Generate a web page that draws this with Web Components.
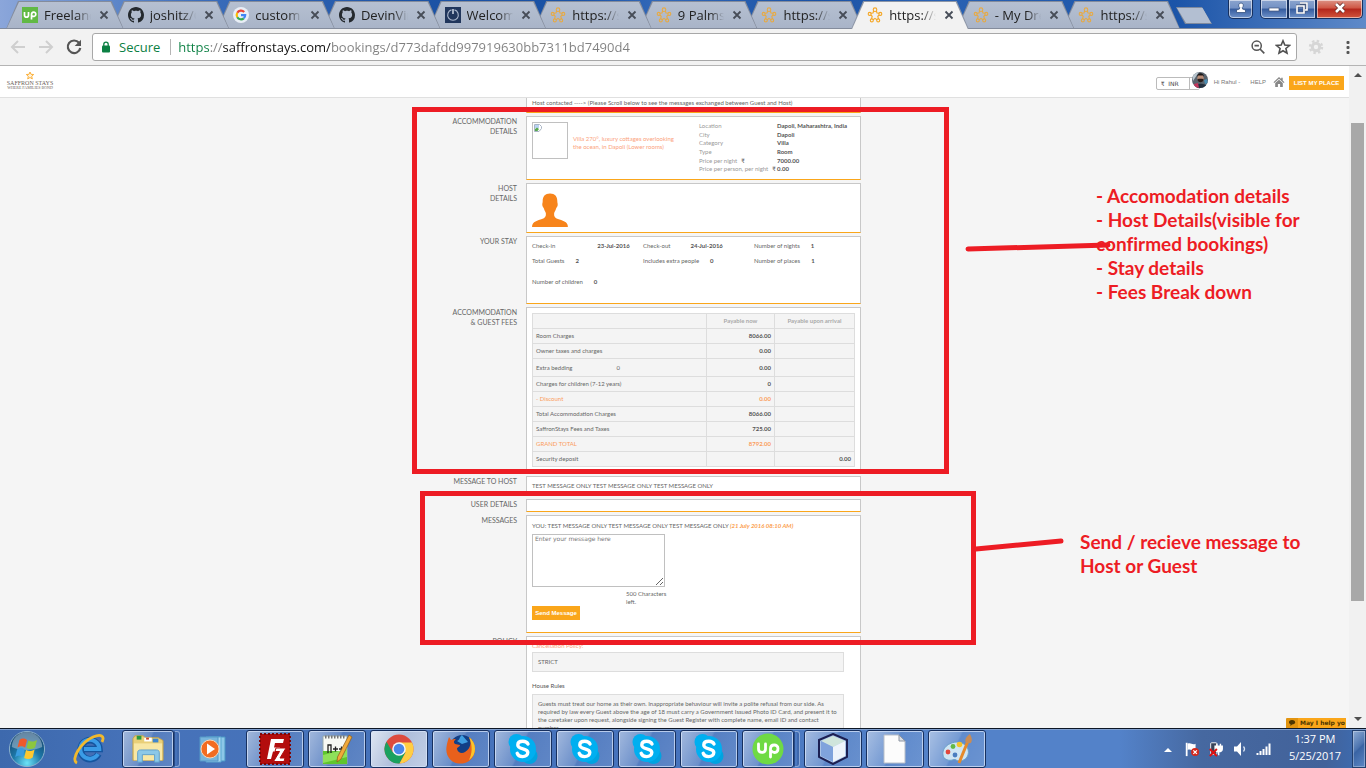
<!DOCTYPE html>
<html lang="en">
<head>
<meta charset="utf-8">
<title>SaffronStays booking</title>
<style>
html, body { margin: 0; height: 100%; }
body { font-family: "Open Sans", "Noto Sans", sans-serif; overflow: hidden; }
</style>
</head>
<body>
<desk-screen></desk-screen>
<script>
const define = (name, css, html, setup) => {
  const tpl = document.createElement('template');
  tpl.innerHTML = '<style>*,*::before,*::after{box-sizing:border-box}' + css + '</style>' + html;
  customElements.define(name, class extends HTMLElement {
    constructor() {
      super();
      this.attachShadow({ mode: 'open' }).append(tpl.content.cloneNode(true));
    }
    connectedCallback() { if (setup) setup.call(this, this.shadowRoot); }
  });
};

/* ---------- icons ---------- */
const svg = (vb, body) => `<svg viewBox="${vb}" width="100%" height="100%" aria-hidden="true">${body}</svg>`;
const skype = svg('0 0 32 32', '<circle cx="9.500" cy="9" r="8" fill="#00aff0"/><circle cx="22.500" cy="23" r="8" fill="#00a3e0"/><circle cx="16" cy="16" r="13" fill="#00aff0"/><path d="M21 11c-1-2-3-2.700-5.200-2.700-3 0-5 1.400-5 3.700 0 5.200 10 2.600 10 7.500 0 2.500-2.200 4.100-5.200 4.100-2.600 0-4.700-1-5.400-3.300" fill="none" stroke="#fff" stroke-width="3.400" stroke-linecap="round"/>');
const ICONS = {
  star5: svg('0 0 16 16', '<g fill="none" stroke="#f5a623" stroke-width="1.100" stroke-linejoin="round"><path d="M6.600 4L6 6 3.600 6.200M3.500 8L5.200 9.300 4.500 11.800M6 12.900L8 11.400 10 12.900M11.500 11.800L10.800 9.300 12.500 8M12.400 6.200L10 6 9.400 4"/><circle cx="8" cy="2.700" r="1.800"/><circle cx="13.300" cy="6.900" r="1.500"/><circle cx="2.700" cy="6.900" r="1.500"/><circle cx="11.200" cy="13.400" r="1.500"/><circle cx="4.800" cy="13.400" r="1.500"/></g>'),
  github: svg('0 0 16 16', '<path fill="#24292e" d="M8 0C3.580 0 0 3.580 0 8c0 3.540 2.290 6.530 5.470 7.590.4.070.55-.17.55-.38 0-.19-.01-.82-.01-1.490-2.010.37-2.530-.49-2.690-.94-.09-.23-.48-.94-.82-1.130-.28-.15-.68-.52-.01-.53.63-.01 1.080.58 1.230.82.72 1.210 1.870.87 2.330.66.070-.52.28-.87.51-1.070-1.780-.2-3.640-.89-3.640-3.950 0-.87.31-1.590.82-2.150-.08-.2-.36-1.020.08-2.120 0 0 .67-.21 2.200.82.64-.18 1.320-.27 2-.27s1.360.09 2 .27c1.530-1.040 2.200-.82 2.200-.82.44 1.100.16 1.920.08 2.120.51.56.82 1.270.82 2.150 0 3.070-1.870 3.750-3.650 3.950.29.25.54.73.54 1.480 0 1.070-.01 1.930-.01 2.200 0 .21.15.46.55.38A8 8 0 0 0 16 8c0-4.420-3.580-8-8-8z"/>'),
  google: svg('0 0 16 16', '<circle cx="8" cy="8" r="8" fill="#e9eef6"/><g fill="none" stroke-width="2.200"><path d="M4.300 5.800A4.300 4.300 0 0 1 11.200 5" stroke="#ea4335"/><path d="M4.300 5.800a4.300 4.300 0 0 0 0 4.400" stroke="#fbbc05"/><path d="M4.300 10.200A4.300 4.300 0 0 0 10.800 11.300" stroke="#34a853"/><path d="M8 8.100h4.200c0 1.300-.5 2.400-1.400 3.200" stroke="#4285f4"/></g>'),
  upsq: svg('0 0 16 16', '<rect width="16" height="16" fill="#61b944"/><path d="M2.500 5v3.200c0 2.600 4 2.600 4 0V5M9.500 12.500V7.700c0-3.400 4.300-3.200 4.300-.5s-3 2.700-4.300 1" fill="none" stroke="#fff" stroke-width="1.700"/>'),
  power: svg('0 0 16 16', '<rect width="16" height="16" fill="#21365c"/><path d="M6.500 2.900a5.300 5.300 0 1 0 3 0" fill="none" stroke="#a9b6cc" stroke-width="1.100"/><path d="M8 2v5" stroke="#dfe6f2" stroke-width="1.400"/>'),
  close: svg('0 0 10 10', '<path d="M1.500 1.500l7 7M8.500 1.500l-7 7" stroke="#474d58" stroke-width="1.800"/>'),
  back: svg('0 0 16 16', '<path d="M15 8H2M8 2L2 8l6 6" fill="none" stroke="#cfcfcf" stroke-width="2"/>'),
  fwd: svg('0 0 16 16', '<path d="M1 8h13M8 2l6 6-6 6" fill="none" stroke="#cfcfcf" stroke-width="2"/>'),
  reload: svg('0 0 16 16', '<path d="M13 3.800A6.300 6.300 0 1 0 14.300 9" fill="none" stroke="#555" stroke-width="2.200"/><path d="M15 .7v6.300H8.700z" fill="#555"/>'),
  lock: svg('0 0 10 12', '<rect x="1" y="4.500" width="8" height="7" rx="1" fill="#0b8043"/><path d="M2.800 5V3.300a2.200 2.200 0 0 1 4.400 0V5" fill="none" stroke="#0b8043" stroke-width="1.300"/>'),
  zoomout: svg('0 0 14 14', '<circle cx="5.700" cy="5.700" r="4.600" fill="none" stroke="#555" stroke-width="1.500"/><path d="M3.500 5.700h4.400M9 9l4.300 4.300" stroke="#555" stroke-width="1.700"/>'),
  star: svg('0 0 16 16', '<path d="M8 1.800l1.800 4.300 4.700.4-3.600 3 1.100 4.600L8 11.700l-4 2.400 1.100-4.600-3.600-3 4.700-.4z" fill="none" stroke="#505050" stroke-width="1.600"/>'),
  gear: svg('0 0 16 16', '<circle cx="8" cy="8" r="3.700" fill="none" stroke="#d6d6d6" stroke-width="3"/><circle cx="8" cy="8" r="6" fill="none" stroke="#d6d6d6" stroke-width="2.400" stroke-dasharray="2.400 2.310"/>'),
  dots: svg('0 0 4 14', '<g fill="#555"><rect x=".5" y="1" width="3" height="3" rx="1"/><rect x=".5" y="6" width="3" height="3" rx="1"/><rect x=".5" y="11" width="3" height="3" rx="1"/></g>'),
  person: svg('0 0 12 12', '<path d="M6 1a2.400 2.400 0 0 0-1.300 4.400L4.500 7 1.500 8v2.500h9V8l-3-1-.2-1.600A2.400 2.400 0 0 0 6 1z" fill="#fff" stroke="#34507f" stroke-width=".8"/>'),
  min: svg('0 0 12 12', '<rect x="1" y="6" width="10" height="3" fill="#fff" stroke="#42557a" stroke-width=".7"/>'),
  max: svg('0 0 12 12', '<path d="M4 1h7v7H9M1 4h7v7H1z" fill="none" stroke="#42557a" stroke-width="2.800"/><path d="M4 1h7v7H9M1 4h7v7H1z" fill="none" stroke="#fff" stroke-width="1.600"/>'),
  winx: svg('0 0 12 12', '<path d="M2 2l8 8M10 2l-8 8" stroke="#5c2420" stroke-width="4"/><path d="M2 2l8 8M10 2l-8 8" stroke="#fff" stroke-width="2.600"/>'),
  logostar: svg('0 0 10 9', '<path d="M5 1l1 2.300 2.700.2-2 1.800.6 2.600L5 6.500 2.700 7.900l.6-2.600-2-1.800L4 3.300z" fill="#fff3dc" stroke="#fbb03b" stroke-width="1"/>'),
  avatar: svg('0 0 16 16', '<defs><clipPath id="a"><circle cx="8" cy="8" r="8"/></clipPath></defs><g clip-path="url(#a)"><rect width="16" height="16" fill="#59636d"/><path d="M0 3l4-3h3L1 9z" fill="#b9c6cf"/><ellipse cx="8.500" cy="6" rx="3.200" ry="3.800" fill="#b98d77"/><path d="M5 5c0-5 7-5 7 0l-1-1.500H6z" fill="#1a1717"/><path d="M5.400 7.300c1.500-.6 4.800-.6 6.200 0 0 4-6.200 4-6.200 0z" fill="#2a1e1c"/><path d="M3 16c0-5 10-6 12-1v2z" fill="#22303f"/><path d="M2 12l4-1 1 5H3z" fill="#c2355c"/><path d="M12 8l3-1 1 4-3 1z" fill="#4a8fb5"/></g>'),
  home: svg('0 0 12 12', '<path d="M6 1L.5 6.200l.8.8L6 2.800 10.700 7l.8-.8L9.700 4.500V1.700H8.200v1.400z" fill="#888"/><path d="M6 3.700L2.200 7v4h2.700V8h2.200v3h2.700V7z" fill="#888"/>'),
  broken: svg('0 0 8 8', '<path d="M.5.500h5l2 2v2L5 7.500H.5z" fill="#fff" stroke="#a8b4c4"/><path d="M1 1h4v3H1z" fill="#b9d3f3"/><path d="M1 7V5l2-1.500L5 5 3.500 7z" fill="#58a84f"/>'),
  user: svg('0 0 36 34', '<path d="M18 0.500c5 0 7.300 3 7.300 7.500 0 2 .5 2 .4 4-.2 1.900-1.200 2-1.600 3.600-.5 2.300-1.800 3.400-2 4.900-.3 3 1 4.500 3.800 5.500 4 1.500 10 2.200 10 8H0c0-5.800 6-6.500 10-8 2.800-1 4.200-2.500 3.900-5.500-.2-1.500-1.500-2.600-2-4.900-.4-1.600-1.400-1.700-1.600-3.600-.1-2 .4-2 .4-4C10.700 3.500 13 .5 18 .5z" fill="#f7841b"/>'),
  chat: svg('0 0 8 8', '<path d="M4 1c4.300 0 4.300 4.500 0 4.500L2.500 7V5.200C0 4.500.5 1 4 1z" fill="#4d3600"/>'),
  orb: svg('0 0 40 40', '<defs><radialGradient id="o" cx=".5" cy=".9" r=".9"><stop offset="0" stop-color="#6de3f7"/><stop offset=".45" stop-color="#1d78a8"/><stop offset="1" stop-color="#143c63"/></radialGradient></defs><circle cx="20" cy="20" r="18.500" fill="url(#o)" stroke="#8fb4cf" stroke-width="1"/><path d="M4 18a16 16 0 0 1 32 0c-8 4-24 4-32 0z" fill="#b8cede" opacity=".5"/><path d="M12 10.500c3-2 5-2 8 0l-2 8c-3-2-5-2-8 0z" fill="#f0592a"/><path d="M21.500 11c3 1.500 5 1.500 9-.5l-2 8c-3 2-6 2-9 .5z" fill="#8cc63f"/><path d="M9.600 20.500c3-2 5-2 8 0l-2 8c-3-2-5-2-8 0z" fill="#3a9de0"/><path d="M19 21c3 1.500 5 1.500 9-.5l-2 8.500c-3 2-6 2-9 .5z" fill="#fdc82f"/>'),
  ie: svg('0 0 32 32', '<path d="M25.500 21a9.500 9.500 0 1 1 1-5H11" fill="none" stroke="#15559f" stroke-width="6.500"/><path d="M25 21a9.500 9.500 0 1 1 1.300-5H11" fill="none" stroke="#3a9be6" stroke-width="4"/><path d="M4 30C-3 27 8 9 20 4c8-3.500 12-1 9 5" fill="none" stroke="#f2b92c" stroke-width="2.800"/>'),
  explorer: svg('0 0 34 32', '<path d="M1 5l2-3h9l2 2h14l5 3v21H1z" fill="#e9cf78" stroke="#c3a24a"/><path d="M5 2h5v4H5z" fill="#2b9a3e"/><path d="M13 4h8v4h-8z" fill="#fff"/><path d="M15 4h3v2h-3z" fill="#c8402a"/><path d="M22 5h6v4h-6z" fill="#3f86cf"/><path d="M2 10h30v18H2z" fill="#f8e7a5"/><path d="M6 30V20c0-2 1-3 3-3h17c2 0 3 1 3 3v10h-5v-8H11v8z" fill="#8cc8e8" stroke="#5f9fca"/>'),
  media: svg('0 0 32 32', '<path d="M12 4h16v24H12z" fill="#8cc8e8" stroke="#4a97c4"/><path d="M9 4h15v25H9z" fill="#a9d7ee" stroke="#5aa7d2"/><path d="M3 4h18v24H3z" fill="#78b5dc" stroke="#5598c6"/><circle cx="13" cy="16" r="9" fill="#f26c22" stroke="#fbd6b5"/><path d="M10 10.500v11l8-5.500z" fill="#fff"/>'),
  fz: svg('0 0 32 32', '<rect x="1" y="1" width="30" height="30" fill="#b30d0d" stroke="#7e0606" stroke-width="2" stroke-dasharray="2 2"/><path d="M8 26L12 6h13l-1 4h-8l-1 4.500h6l-1 4h-6L12 26z" fill="#fff"/><path d="M17 15h10l-6 10h5l-1 3.500H14.500l6-10H16z" fill="#fff" stroke="#b30d0d"/>'),
  npp: svg('0 0 32 32', '<path d="M2 3h24v28H2z" fill="#f7f9f4" stroke="#9aa"/><path d="M2 18h24v13H2z" fill="#5fc52e"/><path d="M2 22l24-6v8L2 30z" fill="#8fe05a"/><path d="M4 4h20" stroke="#777" stroke-width="3" stroke-dasharray="1.500 1.500"/><path d="M7 20v-8h3v8M12 16h5M14.500 13.500v5M18 16h5M20.500 13.500v5" stroke="#222" stroke-width="1.300" fill="none"/><path d="M28 2l3 2-11 22-4 3 .5-5z" fill="#f1a93a" stroke="#8a5a18" stroke-width=".7"/>'),
  chrome: svg('0 0 32 32', '<circle cx="16" cy="16" r="14.500" fill="#dd4b3e"/><path d="M3.500 8.700A14.500 14.500 0 0 0 16.500 30.500L22.500 19.500 16 16 9.500 19z" fill="#1aa15f"/><path d="M16.500 30.500A14.500 14.500 0 0 0 29 9.500H16l6.500 10z" fill="#ffce44"/><circle cx="16" cy="16" r="6.800" fill="#f4f6f8"/><circle cx="16" cy="16" r="5.300" fill="#4a86ea"/>'),
  firefox: svg('0 0 32 32', '<circle cx="17" cy="14" r="12" fill="#123f86"/><path d="M17 2c-3 2-2 5-5 6l5 3 6-2z" fill="#3f9de0"/><path d="M24 4c9 7 8 22-4 26-12 3-20-6-18.500-16C2 10 3 7 4 4l2 3c2-1 3-1 5-1-2 2-3 3-1 5l5 1c0 2-3 2-3 4 1 4 5 5 8 3 5-3 7-8 4-15z" fill="#e8601c"/><path d="M24 4c8 6 8 18 0 23 3-6 4-14 0-23z" fill="#fbc52b"/>'),
  skype,
  upwork: svg('0 0 32 32', '<circle cx="16" cy="16" r="15.500" fill="#6fda44"/><path d="M6.500 11v5c0 4.500 7 4.500 7 0v-5M18.500 24v-8c0-5.500 7.500-5 7.500-.5s-4.500 5.500-7.500 1.500" fill="none" stroke="#fff" stroke-width="2.800" stroke-linecap="round"/>'),
  cube: svg('0 0 32 32', '<path d="M16 1l14 6v17l-14 7-14-7V7z" fill="#a9c3e6" stroke="#1b1f52" stroke-width="2"/><path d="M16 3l12 5-12 6L4 8z" fill="#cfe5dc"/><path d="M4 8l12 6v15L4 23z" fill="#7fa3dc"/><path d="M28 8l-12 6v15l12-6z" fill="#eef4fb"/>'),
  file: svg('0 0 32 32', '<path d="M5 2h15l6 6v22H5z" fill="#fcfcfc" stroke="#b9bfc8"/><path d="M20 2v6h6z" fill="#d9dde3" stroke="#8e96a3"/>'),
  paint: svg('0 0 32 32', '<path d="M3 25c-4-8 3-15 12-16 9 0 14 6 12 13-2 6-9 7-12 5-2-2-6 3-12-2z" fill="#cfe6f4" stroke="#6ba0c8"/><circle cx="7" cy="19" r="2.400" fill="#e2483d"/><circle cx="12" cy="13.500" r="2.400" fill="#63b947"/><circle cx="18.500" cy="11.500" r="2.800" fill="#f5c32c"/><circle cx="14" cy="22" r="2.400" fill="#4a7ec0"/><path d="M27 8l-9 22" stroke="#e58a2a" stroke-width="3"/><path d="M25 10c-2-4 1-7 4-9 1 3 3 5 1 9z" fill="#c98c55"/>'),
  up: svg('0 0 10 6', '<path d="M0 6l5-5 5 5z" fill="#fff"/>'),
  flag: svg('0 0 16 18', '<path d="M2 2v15" stroke="#fff" stroke-width="2"/><path d="M3 3c4-2 5 2 9 0v7c-4 2-5-2-9 0z" fill="#fff"/><circle cx="11.500" cy="12.500" r="4.500" fill="#d3281c"/><path d="M9.500 10.500l4 4M13.500 10.500l-4 4" stroke="#fff" stroke-width="1.400"/>'),
  plug: svg('0 0 16 18', '<rect x="2" y="2" width="7" height="13" rx="1" fill="#39435a" stroke="#fff"/><path d="M9 3v3M13 3v3M7 6h8v3c0 4-8 4-8 0zM11 12v4" stroke="#fff" stroke-width="1.600" fill="#fff"/><path d="M1 9l8 8M9 9l-8 8" stroke="#e01010" stroke-width="2.200"/>'),
  sound: svg('0 0 16 16', '<path d="M2 5.500h3L9 1v14l-4-4.500H2z" fill="#fff"/><path d="M11.500 5.500c1.300 1.500 1.300 3.500 0 5" fill="none" stroke="#dbe4f2" stroke-width="1.200"/>'),
  signal: svg('0 0 16 14', '<path d="M1.500 13v-2M4.500 13V9M7.500 13V7M10.500 13V4.500M13.500 13V1.500" stroke="#fff" stroke-width="2"/>')
};
customElements.define('ui-icon', class extends HTMLElement {
  constructor() { super(); this.attachShadow({ mode: 'open' }); }
  connectedCallback() {
    this.shadowRoot.innerHTML = '<style>:host{display:block;flex:none;width:16px;height:16px}svg{display:block}</style>' + (ICONS[this.getAttribute('name')] || '');
  }
});

/* ---------- browser frame ---------- */
define('browser-tab', `
  :host { display:flex; flex:1 1 0; min-width:0; height:29px; margin-right:-12px; padding:1px 15px 0 16px; align-items:center; gap:6px; position:relative; color:#222; }
  .shape, .shape::before { position:absolute; inset:1px 0 0; clip-path:polygon(12px 0, calc(100% - 12px) 0, 100% 100%, 0 100%); }
  .shape { background:#848c9c; }
  .shape::before { content:""; inset:1px 1px 1px; background:linear-gradient(#b6c0d1,#a9b4c8); }
  :host([active]) .shape { background:#8d96a6; }
  :host([active]) .shape::before { background:#f2f2f2; inset:1px 1px 0; }
  ui-icon, .t, button { position:relative; }
  :host([favicon=star5]:not([active])) #f { opacity:.8; }
  .t { flex:1; min-width:0; overflow:hidden; white-space:nowrap; font-size:13px; line-height:20px; -webkit-mask-image:linear-gradient(90deg,#000 65%,transparent 94%); mask-image:linear-gradient(90deg,#000 65%,transparent 94%); }
  button { border:0; padding:0; margin-left:-1px; background:none; flex:none; }
  button ui-icon { width:10px; height:10px; }`,
  `<div class="shape"></div><ui-icon id="f"></ui-icon><span class="t"><slot></slot></span><button aria-label="Close tab"><ui-icon name="close"></ui-icon></button>`,
  function (r) { const f = r.getElementById('f'); f.setAttribute('name', this.getAttribute('favicon')); f.connectedCallback(); });

define('win-button', `
  :host { display:block; }
  button { width:100%; height:100%; display:flex; align-items:center; justify-content:center; padding:0 0 2px; border:1px solid #16305f; border-top:0; box-shadow:inset 0 0 0 1px rgba(255,255,255,.55); background:linear-gradient(#8ba4ce,#7391c4 45%,#355b9d 50%,#6f93cb); border-radius:inherit; }
  :host([kind=close]) button { background:linear-gradient(#dc9385,#cf5543 45%,#b3261b 50%,#d2553c); }
  ui-icon { width:12px; height:12px; }`,
  `<button><ui-icon></ui-icon></button>`,
  function (r) { const i = r.querySelector('ui-icon'); i.setAttribute('name', this.getAttribute('icon')); i.connectedCallback(); r.querySelector('button').setAttribute('aria-label', this.getAttribute('label')); });

define('tab-strip', `
  :host { display:flex; height:29px; padding-left:6px; background:linear-gradient(90deg,#8ba6da 0,#6a90cf 6%,#3a6cba 15%,#1c53a5 30%,#1a52a5 42%,#3268b8 48%,#1a52a5 60%,#2a62b3 68%,#1b54a8 86%,#5f8ac9 100%); border-bottom:1px solid #7f8a9d; align-items:flex-start; }
  nav { flex:1; display:flex; min-width:0; margin-right:8px; }
  .new { width:36px; height:17px; margin-top:7px; border:0; padding:0; background:#7f8a9e; clip-path:polygon(0 0,26px 0,100% 100%,9px 100%); position:relative; }
  .new::before { content:""; position:absolute; inset:1px; background:#b3bfd2; clip-path:polygon(0 0,26px 0,100% 100%,9px 100%); }
  .me { width:25px; height:19px; margin-left:16px; border-radius:0 0 5px 5px; }
  .win { display:flex; height:19px; margin:0 3px 0 7px; }
  .win win-button { width:28px; } .win win-button:first-child { border-radius:0 0 0 5px; } .win win-button:last-child { width:47px; border-radius:0 0 5px 0; }`,
  `<nav><slot></slot></nav><button class="new" aria-label="New tab"></button>
  <win-button class="me" icon="person" label="Profile"></win-button>
  <div class="win"><win-button icon="min" label="Minimize"></win-button><win-button icon="max" label="Restore"></win-button><win-button kind="close" icon="winx" label="Close"></win-button></div>`,
  function () { [...this.children].forEach((t, i) => t.style.zIndex = t.hasAttribute('active') ? 30 : 20 - i); });

define('browser-toolbar', `
  :host { display:flex; height:37px; padding:0 16px 1px 10px; align-items:center; background:#f2f2f2; border-bottom:1px solid #b4b4b4; }
  button { border:0; padding:0; background:none; flex:none; }
  .nav { display:flex; gap:12px; margin-right:10px; }
  form { flex:1; display:flex; align-items:center; height:28px; border:1px solid #a8a8a8; border-radius:3px; background:#fff; padding:0 5px 0 8px; }
  .lock { width:10px; height:12px; }
  .sec { color:#0b8043; font-size:13px; line-height:20px; margin-left:8px; padding-right:10px; }
  .bar { width:1px; height:16px; background:#b5b5b5; margin-right:7px; }
  input { flex:1; min-width:0; border:0; outline:0; padding:0; height:22px; font:13px/22px "Open Sans",sans-serif; color:#333; -webkit-text-fill-color:transparent; background:linear-gradient(90deg,#0b8043 32px,#808080 32px 45px,#111 45px 153px,#808080 153px) text; -webkit-background-clip:text; }
  .acts { display:flex; gap:10px; align-items:center; }
  .ext { margin-left:11px; } .dots { margin-left:22px; } .dots ui-icon { width:4px; height:14px; }`,
  `<div class="nav"><button aria-label="Back"><ui-icon name="back"></ui-icon></button><button aria-label="Forward"><ui-icon name="fwd"></ui-icon></button><button aria-label="Reload"><ui-icon name="reload"></ui-icon></button></div>
  <form><ui-icon class="lock" name="lock"></ui-icon><span class="sec">Secure</span><span class="bar"></span>
  <input aria-label="Address" value="https://saffronstays.com/bookings/d773dafdd997919630bb7311bd7490d4">
  <span class="acts"><button type="button" aria-label="Zoom"><ui-icon name="zoomout" style="width:14px;height:14px"></ui-icon></button><button type="button" aria-label="Bookmark"><ui-icon name="star"></ui-icon></button></span></form>
  <button class="ext" aria-label="Extension"><ui-icon name="gear"></ui-icon></button><button class="dots" aria-label="Menu"><ui-icon name="dots"></ui-icon></button>`);

/* ---------- site ---------- */
define('site-header', `
  :host { display:flex; flex:none; height:32px; padding:0 5px 0 6px; align-items:center; background:#fff; border-bottom:1px solid #e0e0e0; font-family:"Liberation Sans",sans-serif; font-size:6px; line-height:8px; color:#777; }
  .logo { display:flex; flex-direction:column; align-items:center; color:#6d5f5a; text-decoration:none; font-family:"Liberation Serif",serif; width:48px; white-space:nowrap; padding-bottom:2px; }
  .logo ui-icon { width:10px; height:9px; }
  .logo b { font-weight:400; font-size:6px; line-height:6px; } .logo small { font-size:4px; line-height:4px; }
  .sp { flex:1; }
  select { appearance:none; width:44px; height:13px; margin-top:4px; border:1px solid #bbb; border-radius:2px; padding:0 0 0 4px; background:linear-gradient(90deg,transparent 32px,#bbb 32px 33px,transparent 33px),#fff; font:6px/11px "DejaVu Sans",sans-serif; color:#444; }
  .av { margin:0 0 4px -8px; position:relative; }
  a { color:#777; text-decoration:none; }
  .u { margin-left:6px; } .h { margin-left:10px; } .ho { margin-left:7px; } .ho ui-icon { width:12px; height:12px; }
  .list { margin-left:4px; margin-top:3px; width:55px; height:14px; padding:0; border:0; background:#faa61a; color:#fff; font:bold 6px/14px "Liberation Sans",sans-serif; white-space:nowrap; }`,
  `<a class="logo" href="#"><ui-icon name="logostar"></ui-icon><b>SAFFRON STAYS</b><small>WHERE FAMILIES BOND</small></a><span class="sp"></span>
  <select aria-label="Currency"><option>₹ &nbsp;INR</option></select><ui-icon class="av" name="avatar"></ui-icon>
  <a class="u" href="#">Hi Rahul -</a><a class="h" href="#">HELP</a><a class="ho" href="#" aria-label="Home"><ui-icon name="home"></ui-icon></a><button class="list">LIST MY PLACE</button>`);

define('detail-section', `
  :host { display:grid; grid-template-columns:78px 335px; column-gap:9px; }
  h2 { margin:0; font:400 7px/10px Lato,sans-serif; color:#666; text-align:right; text-transform:uppercase; }
  .box { border:1px solid #c8c8c8; border-bottom-color:#faa61a; background:#fff; padding:5px; min-height:13px; }`,
  `<h2></h2><div class="box"><slot></slot></div>`,
  function (r) { r.querySelector('h2').innerHTML = (this.getAttribute('heading') || '').replace('|', '<br>'); });

define('stay-item', `
  :host { display:flex; } dl { display:flex; margin:0; } dd { margin:0 0 0 var(--gap,11px); font-weight:700; color:#555; }`,
  `<dl><dt><slot></slot></dt><dd><slot name="v"></slot></dd></dl>`);

define('place-card', `
  :host { display:grid; grid-template-columns:41px 126px 1fr; height:52px; }
  .img { width:36px; height:37px; border:1px solid #c0c0c0; padding:1px; } .img ui-icon { width:8px; height:8px; }
  a { color:#fba27c; text-decoration:none; padding-top:13px; width:104px; white-space:nowrap; }
  dl { margin:0; display:grid; grid-template-columns:78px 1fr; grid-template-rows:repeat(6,1fr); color:#999; }
  dt { display:flex; gap:4px; white-space:nowrap; } dt i { font-style:normal; color:#555; } dd { margin:0; font-weight:700; color:#555; white-space:nowrap; }`,
  `<div class="img" role="img" aria-label="Villa"><ui-icon name="broken"></ui-icon></div><a href="#">Villa 270°, luxury cottages overlooking<br>the ocean, in Dapoli (Lower rooms)</a>
  <dl><dt>Location</dt><dd>Dapoli, Maharashtra, India</dd><dt>City</dt><dd>Dapoli</dd><dt>Category</dt><dd>Villa</dd><dt>Type</dt><dd>Room</dd><dt>Price per night <i>₹</i></dt><dd>7000.00</dd><dt>Price per person, per night <i>₹</i></dt><dd>0.00</dd></dl>`);

define('fees-table', `
  :host { display:block; } table { width:323px; border-collapse:collapse; table-layout:fixed; background:#f4f4f4; }
  th,td { border:1px solid #ddd; height:15px; padding:0 3px; text-align:right; font-weight:700; color:#555; line-height:8px; }
  thead th { text-align:center; color:#aaa; } tbody th { text-align:left; font-weight:400; color:#666; }
  .tall th,.tall td { height:18px; } .tall span { margin-left:44px; } .o th,.o td { color:#fb9d5c; }`,
  `<table><colgroup><col style="width:174px"><col style="width:68px"><col></colgroup>
  <thead><tr><th></th><th>Payable now</th><th>Payable upon arrival</th></tr></thead><tbody>
  <tr><th>Room Charges</th><td>8066.00</td><td></td></tr><tr><th>Owner taxes and charges</th><td>0.00</td><td></td></tr>
  <tr class="tall"><th>Extra bedding<span>0</span></th><td>0.00</td><td></td></tr><tr><th>Charges for children (7-12 years)</th><td>0</td><td></td></tr>
  <tr class="o"><th>- Discount</th><td>0.00</td><td></td></tr><tr><th>Total Accommodation Charges</th><td>8066.00</td><td></td></tr>
  <tr><th>SaffronStays Fees and Taxes</th><td>725.00</td><td></td></tr><tr class="o"><th>GRAND TOTAL</th><td>8792.00</td><td></td></tr>
  <tr><th>Security deposit</th><td></td><td>0.00</td></tr></tbody></table>`);

define('message-form', `
  :host { display:block; height:106px; } p { margin:0; padding:1px 0 4px; } em { font-weight:700; font-style:italic; color:#fb9d4c; }
  textarea { display:block; width:133px; height:53px; border:1px solid #c0c0c0; padding:0 2px; font:6px/8px "DejaVu Sans",sans-serif; color:#777; resize:both; margin:0; }
  textarea::placeholder { color:#777; }
  small { display:block; font-size:6px; margin:3px 0 0 94px; width:42px; }
  button { display:block; width:48px; height:14px; border:0; padding:0; background:#faa61a; color:#fff; font:bold 6px/14px "Liberation Sans",sans-serif; white-space:nowrap; }`,
  `<p>YOU: TEST MESSAGE ONLY TEST MESSAGE ONLY TEST MESSAGE ONLY <em>(21 July 2016 08:10 AM)</em></p>
  <textarea aria-label="Message" placeholder="Enter your message here"></textarea><small>500 Characters left.</small><button>Send Message</button>`);

define('policy-text', `
  :host { display:block; } h3,h4 { margin:0; font-weight:400; font-size:6px; line-height:8px; } h3 { color:#fba27c; margin-bottom:2px; } h4 { margin:10px 0 4px; color:#555; }
  div { width:312px; border:1px solid #ddd; background:#f4f4f4; padding:5px; }`,
  `<h3>Cancellation Policy:</h3><div>STRICT</div><h4>House Rules</h4>
  <div>Guests must treat our home as their own. Inappropriate behaviour will invite a polite refusal from our side. As required by law every Guest above the age of 18 must carry a Government Issued Photo ID Card, and present it to the caretaker upon request, alongside signing the Guest Register with complete name, email ID and contact number.</div>`);

/* red pen notes drawn over the booking */
define('red-notes', `
  :host { position:absolute; inset:0; pointer-events:none; color:#ed1c24; font:bold 19px/24px Lato,sans-serif; font-variant-ligatures:none; }
  .r { position:absolute; border:5px solid #ed1c24; } svg { position:absolute; left:0; top:0; overflow:visible; }
  p { position:absolute; margin:0; white-space:nowrap; }`,
  `<div class="r" style="left:-27px;top:9px;width:537px;height:367px"></div><div class="r" style="left:-19px;top:393px;width:556px;height:154px"></div>
  <svg width="1" height="1"><g stroke="#ed1c24" stroke-width="5" stroke-linecap="round"><path d="M529 151L669 147M537 451L622 443"/></g></svg>
  <p style="left:657px;top:86px">- Accomodation details<br>- Host Details(visible for<br>confirmed bookings)<br>- Stay details<br>- Fees Break down</p>
  <p style="left:641px;top:432px">Send / recieve message to<br>Host or Guest</p>`);

define('booking-page', `
  :host { display:block; width:471px; margin:0 auto; position:relative; font:6px/8px Lato,sans-serif; color:#666; }
  main { display:flex; flex-direction:column; gap:3px; }
  .top { margin-top:-5px; }
  .stay { display:grid; grid-template-columns:111px 111px 1fr; grid-template-rows:15px 21px 20px; height:56px; }
  .w { --gap:42px; } .w2 { --gap:20px; }
  .host { height:38px; padding-top:4px; } .host ui-icon { width:36px; height:34px; }`,
  `<main>
  <detail-section class="top">Host contacted ----&gt; (Please Scroll below to see the messages exchanged between Guest and Host)</detail-section>
  <detail-section heading="Accommodation|Details"><place-card></place-card></detail-section>
  <detail-section heading="Host|Details"><div class="host"><ui-icon name="user"></ui-icon></div></detail-section>
  <detail-section heading="Your stay"><div class="stay">
    <stay-item class="w">Check-in<span slot="v">23-Jul-2016</span></stay-item><stay-item class="w2">Check-out<span slot="v">24-Jul-2016</span></stay-item><stay-item>Number of nights<span slot="v">1</span></stay-item>
    <stay-item>Total Guests<span slot="v">2</span></stay-item><stay-item>Includes extra people<span slot="v">0</span></stay-item><stay-item>Number of places<span slot="v">1</span></stay-item>
    <stay-item>Number of children<span slot="v">0</span></stay-item></div></detail-section>
  <detail-section heading="Accommodation|&amp; Guest fees"><fees-table></fees-table></detail-section>
  <detail-section heading="Message to host">TEST MESSAGE ONLY TEST MESSAGE ONLY TEST MESSAGE ONLY</detail-section>
  <detail-section heading="User details"></detail-section>
  <detail-section heading="Messages"><message-form></message-form></detail-section>
  <detail-section heading="Policy"><policy-text></policy-text></detail-section>
  </main><red-notes></red-notes>`);

define('scroll-rail', `
  :host { display:flex; flex-direction:column; align-items:center; width:17px; background:#f1f1f1; padding:7px 0; }
  i { width:0; height:0; border:4px solid transparent; } .u { border-bottom-color:#505050; border-top:0; } .d { border-top-color:#505050; border-bottom:0; margin-top:auto; }
  b { width:13px; height:478px; flex:0 1 auto; background:#a8a8a8; margin-top:46px; }`,
  `<i class="u"></i><b></b><i class="d"></i>`);

define('help-chip', `
  :host { display:block; position:absolute; right:3px; bottom:0; }
  button { display:flex; align-items:center; width:60px; height:10px; border:0; padding:0; gap:4px; overflow:hidden; background:linear-gradient(90deg,#e29410 12px,#faa61a 12px); font:bold 6px/10px "DejaVu Sans",sans-serif; color:#4d3600; white-space:nowrap; border-radius:1px 0 0 0; }
  ui-icon { width:8px; height:8px; margin-left:2px; }`,
  `<button><ui-icon name="chat"></ui-icon>May I help yo</button>`);

/* ---------- task bar ---------- */
define('task-button', `
  :host { display:block; flex:0 1 58px; min-width:0; height:38px; position:relative; }
  button { width:100%; height:100%; padding:0; border:1px solid transparent; background:none; display:flex; align-items:center; justify-content:center; border-radius:3px; }
  :host([open]) button { border-color:#17305f; box-shadow:inset 0 0 0 1px rgba(215,228,250,.75); background:linear-gradient(115deg,rgba(255,255,255,.5),rgba(255,255,255,.2) 45%,rgba(255,255,255,.08) 48%,rgba(255,255,255,.14)); }
  :host([current]) button { background:linear-gradient(115deg,#dfe6f2,#aebedb 50%,#c2cfe6); }
  :host([stack]) button { width:calc(100% - 6px); } :host([stack])::after { content:""; position:absolute; top:1px; right:0; bottom:1px; width:6px; border:1px solid #8ca9d8; border-left-color:#274a86; border-radius:0 3px 3px 0; box-shadow:inset -2px 0 0 #3f69ae; }
  ui-icon { width:32px; height:32px; } :host([big]) ui-icon { width:38px; height:38px; }`,
  `<button><ui-icon></ui-icon></button>`,
  function (r) { const i = r.querySelector('ui-icon'), n = this.getAttribute('app'); i.setAttribute('name', n); i.connectedCallback(); r.querySelector('button').setAttribute('aria-label', n); });

define('task-bar', `
  :host { display:flex; flex:none; height:40px; padding-top:1px; border-top:1px solid #0d1726; box-shadow:inset 0 1px 0 #7f9fcf; background:linear-gradient(90deg,#3d69ad 0,#4672b9 10%,#4673bd 50%,#5382c9 68%,#5382c9 82%,#4668a0 88%,#42629a 97%,#3c6db4 100%); align-items:flex-start; }
  .apps { display:flex; gap:4px; flex:1 1 0; min-width:0; padding-right:12px; }
  .apps task-button:first-child { margin-left:-2px; }
  .tray { display:flex; align-items:center; gap:8px; height:38px; margin-right:17px; }
  .tray ui-icon { width:16px; height:16px; } .tray .up { width:8px; height:5px; margin-right:4px; }
  time { color:#fff; font-size:11px; line-height:17px; text-align:center; white-space:nowrap; margin-right:11px; }
  .show { width:14px; height:38px; padding:0; border:1px solid #22406f; background:linear-gradient(135deg,#8facd4,#4c74b0 45%,#3a64a4 50%,#5c86c4); box-shadow:inset 0 0 0 1px rgba(255,255,255,.3); }`,
  `<div class="apps"><task-button big app="orb"></task-button><task-button app="ie"></task-button><task-button open stack app="explorer"></task-button><task-button app="media"></task-button><task-button open app="fz"></task-button><task-button open app="npp"></task-button><task-button open current app="chrome"></task-button><task-button open app="firefox"></task-button><task-button open app="skype"></task-button><task-button open app="skype"></task-button><task-button open app="skype"></task-button><task-button open app="skype"></task-button><task-button open stack app="upwork"></task-button><task-button open app="cube"></task-button><task-button open app="file"></task-button><task-button open app="paint"></task-button></div>
  <div class="tray"><ui-icon class="up" name="up"></ui-icon><ui-icon name="flag"></ui-icon><ui-icon name="plug"></ui-icon><ui-icon name="sound"></ui-icon><ui-icon name="signal"></ui-icon></div>
  <time>1:37 PM<br>5/25/2017</time><button class="show" aria-label="Show desktop"></button>`);

define('desk-screen', `
  :host { display:flex; flex-direction:column; height:100vh; }
  .view { flex:1; min-height:0; display:flex; } .page { flex:1; min-width:0; position:relative; display:flex; flex-direction:column; background:#f5f5f5; overflow:hidden; }
  .body { flex:1; min-height:0; overflow:hidden; }`,
  `<tab-strip><browser-tab favicon="upsq">Freelance</browser-tab><browser-tab favicon="github">joshitz/Cu</browser-tab><browser-tab favicon="google">custom we</browser-tab><browser-tab favicon="github">DevinVine</browser-tab><browser-tab favicon="power">Welcome</browser-tab><browser-tab favicon="star5">https://sa</browser-tab><browser-tab favicon="star5">9 Palms</browser-tab><browser-tab favicon="star5">https://sa</browser-tab><browser-tab active favicon="star5">https://sa</browser-tab><browser-tab favicon="star5">- My Drea</browser-tab><browser-tab favicon="star5">https://sa</browser-tab></tab-strip>
  <browser-toolbar></browser-toolbar>
  <div class="view"><div class="page"><site-header></site-header><div class="body"><booking-page></booking-page></div><help-chip></help-chip></div><scroll-rail></scroll-rail></div>
  <task-bar></task-bar>`);
</script>
</body>
</html>
